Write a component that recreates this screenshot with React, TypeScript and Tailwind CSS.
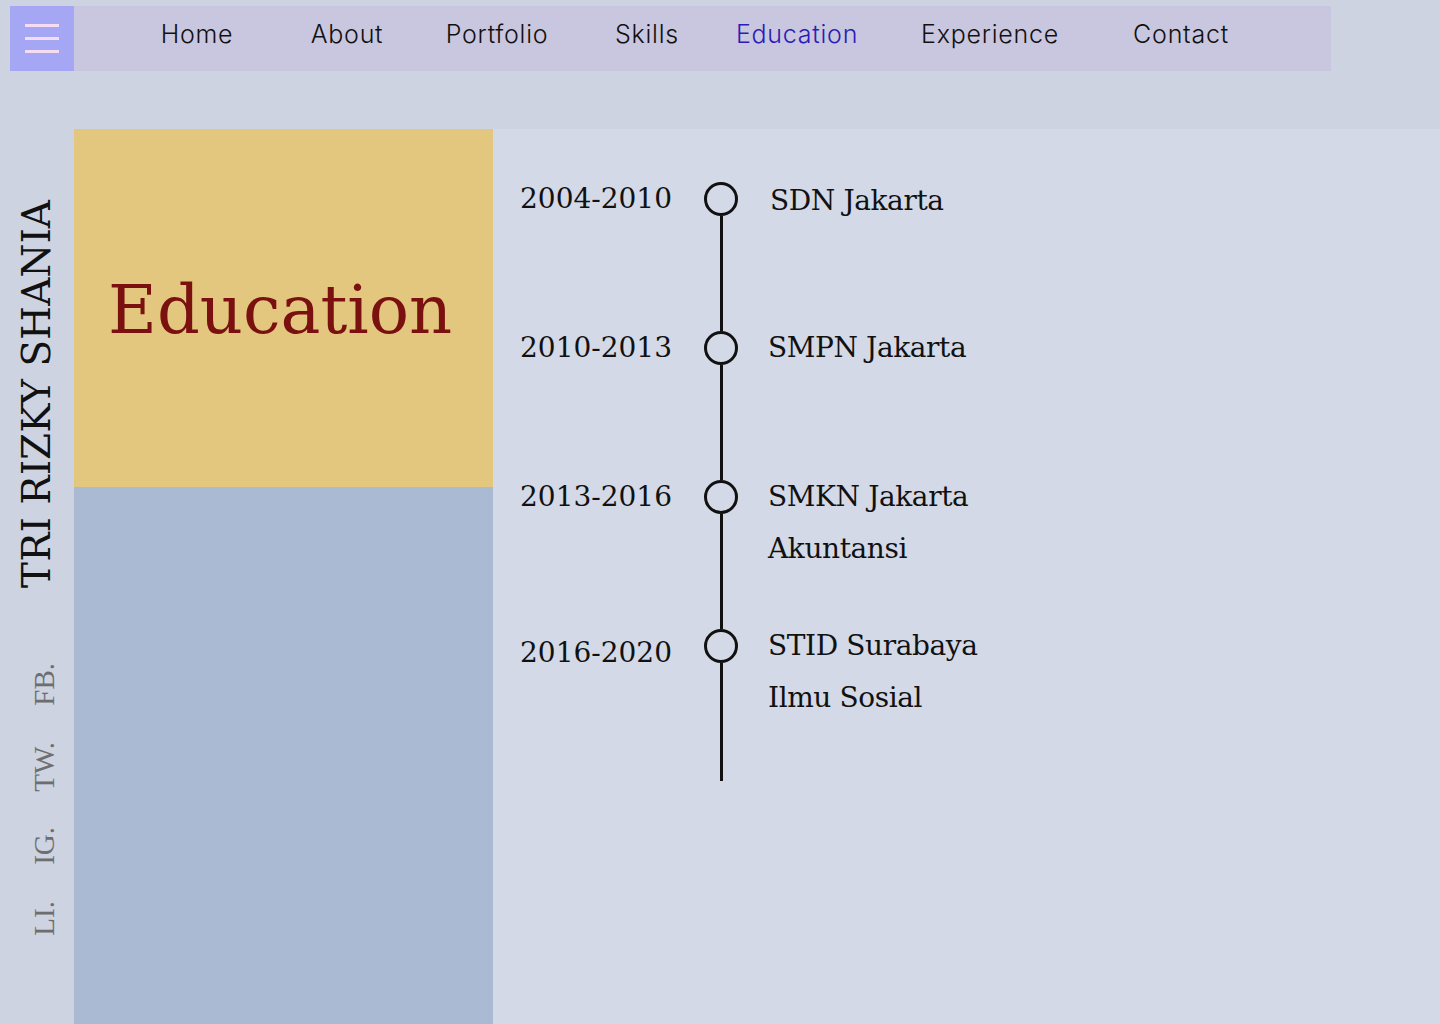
import React from "react";

const navItems = [
  { label: "Home", w: "w-[150px]" },
  { label: "About", w: "w-[150px]" },
  { label: "Portfolio", w: "w-[150px]" },
  { label: "Skills", w: "w-[150px]" },
  { label: "Education", w: "w-[150px]", active: true },
  { label: "Experience", w: "w-[236px]" },
  { label: "Contact", w: "w-[146px]" },
];

const socials = ["FB.", "TW.", "IG.", "LI."];

const schools = [
  { years: "2004-2010", lines: ["SDN Jakarta"], h: "h-[149px]", first: true },
  { years: "2010-2013", lines: ["SMPN Jakarta"], h: "h-[149px]" },
  { years: "2013-2016", lines: ["SMKN Jakarta", "Akuntansi"], h: "h-[149px]" },
  { years: "2016-2020", lines: ["STID Surabaya", "Ilmu Sosial"], h: "h-[161px]", yearOffset: true },
];

function Navbar() {
  return (
    <nav className="ml-[10px] mt-[6px] flex h-[65px] w-[1321px] bg-[#c9c6df]">
      {/* menu toggle */}
      <button className="flex h-full w-[64px] flex-col items-center justify-center gap-[10px] bg-[#a5a7f5]">
        <span className="block h-[3px] w-[34px] bg-[#f5dcf2]" />
        <span className="block h-[3px] w-[34px] bg-[#f5dcf2]" />
        <span className="block h-[3px] w-[34px] bg-[#f5dcf2]" />
      </button>
      <ul className="ml-[48px] flex items-center pb-[8px] font-['Inter',sans-serif] text-[25px] font-light tracking-[0.03em]">
        {navItems.map((item) => (
          <li
            key={item.label}
            className={`${item.w} text-center ${item.active ? "text-[#2b1cb8]" : "text-[#111]"}`}
          >
            {item.label}
          </li>
        ))}
      </ul>
    </nav>
  );
}

function SideStrip() {
  return (
    <aside className="flex w-[74px] shrink-0 flex-col items-center">
      <h1 className="mt-[71px] rotate-180 font-['DejaVu_Serif',serif] text-[39px] leading-[40px] text-[#111] [writing-mode:vertical-rl]">
        TRI RIZKY SHANIA
      </h1>
      <div className="ml-[14px] mt-[75px] flex flex-col gap-[36px]">
        {socials.map((s) => (
          <a
            key={s}
            className="rotate-180 font-['Liberation_Serif',serif] text-[29px] leading-[29px] text-[#6e6e6e] [writing-mode:vertical-rl]"
          >
            {s}
          </a>
        ))}
      </div>
    </aside>
  );
}

function Timeline() {
  return (
    <div className="pl-[27px] pt-[44px] font-['DejaVu_Serif',serif] text-[28px] leading-[52px] text-[#111]">
      {schools.map((row, i) => (
        <div key={row.years} className={`flex ${row.h}`}>
          <div className={`w-[184px] ${row.yearOffset ? "pt-[7px]" : ""}`}>{row.years}</div>
          <div className="flex w-[34px] flex-col items-center">
            <span className={`block h-[9px] w-[3px] ${i === 0 ? "bg-transparent" : "bg-[#111]"}`} />
            <span className="block h-[34px] w-[34px] shrink-0 rounded-full border-[3px] border-[#111]" />
            <span className="block w-[3px] flex-1 bg-[#111]" />
          </div>
          <div className={`tracking-[-0.4px] ${row.first ? "pl-[32px] pt-[2px]" : "pl-[30px]"}`}>
            {row.lines.map((l) => (
              <div key={l}>{l}</div>
            ))}
          </div>
        </div>
      ))}
    </div>
  );
}

export default function App() {
  return (
    <div className="flex h-screen flex-col overflow-hidden bg-[#cdd3e1]">
      <Navbar />
      <main className="mt-[58px] flex flex-1">
        <SideStrip />
        <section className="flex w-[419px] shrink-0 flex-col">
          <div className="flex h-[358px] items-center bg-[#e4c77e] pl-[34px]">
            <h2 className="pt-[4px] font-['DejaVu_Serif',serif] text-[67px] text-[#7a1010]">
              Education
            </h2>
          </div>
          <div className="flex-1 bg-[#a9bad2]" />
        </section>
        <section className="flex-1 bg-[#d3d9e6]">
          <Timeline />
        </section>
      </main>
    </div>
  );
}
